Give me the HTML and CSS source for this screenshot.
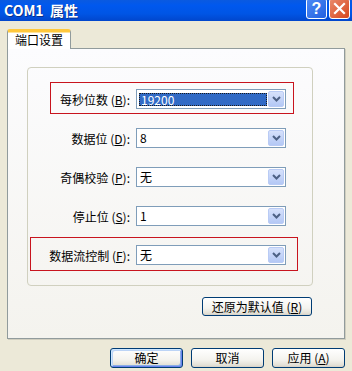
FILE: index.html
```html
<!DOCTYPE html>
<html lang="zh-CN">

<head>
    <meta charset="UTF-8" />
    <meta name="viewport" content="width=device-width, initial-scale=1.0" />
    <title>COM1 属性</title>

    <link rel="stylesheet" href="styles.css">

</head>

<body>
    <div class="window">
        <div class="titlebar">
            <span class="title">COM1&nbsp; 属性</span>
            <div class="caption-buttons">
                <span class="cap help">?</span>
                <span class="cap close">
                    <svg width="13" height="13" viewBox="0 0 13 13">
                        <path d="M2 2 L11 11 M11 2 L2 11" stroke="#fff" stroke-width="2.2" stroke-linecap="square" />
                    </svg>
                </span>
            </div>
        </div>

        <div class="client">
            <div class="tabs">
                <div class="tab active">端口设置</div>
            </div>

            <div class="panel">
                <div class="group">
                    <div class="field">
                        <label>每秒位数 (<u>B</u>):</label>
                        <div class="combo">
                            <span class="value selected">19200</span>
                            <span class="drop"><svg width="9" height="6" viewBox="0 0 9 6"><path d="M1 1 L4.5 4.5 L8 1" fill="none" stroke="#4D6185" stroke-width="2" /></svg></span>
                        </div>
                    </div>
                    <div class="field">
                        <label>数据位 (<u>D</u>):</label>
                        <div class="combo">
                            <span class="value">8</span>
                            <span class="drop"><svg width="9" height="6" viewBox="0 0 9 6"><path d="M1 1 L4.5 4.5 L8 1" fill="none" stroke="#4D6185" stroke-width="2" /></svg></span>
                        </div>
                    </div>
                    <div class="field">
                        <label>奇偶校验 (<u>P</u>):</label>
                        <div class="combo">
                            <span class="value">无</span>
                            <span class="drop"><svg width="9" height="6" viewBox="0 0 9 6"><path d="M1 1 L4.5 4.5 L8 1" fill="none" stroke="#4D6185" stroke-width="2" /></svg></span>
                        </div>
                    </div>
                    <div class="field">
                        <label>停止位 (<u>S</u>):</label>
                        <div class="combo">
                            <span class="value">1</span>
                            <span class="drop"><svg width="9" height="6" viewBox="0 0 9 6"><path d="M1 1 L4.5 4.5 L8 1" fill="none" stroke="#4D6185" stroke-width="2" /></svg></span>
                        </div>
                    </div>
                    <div class="field">
                        <label>数据流控制 (<u>F</u>):</label>
                        <div class="combo">
                            <span class="value">无</span>
                            <span class="drop"><svg width="9" height="6" viewBox="0 0 9 6"><path d="M1 1 L4.5 4.5 L8 1" fill="none" stroke="#4D6185" stroke-width="2" /></svg></span>
                        </div>
                    </div>

                    <!-- red annotation boxes -->
                    <div class="mark mark-baud"></div>
                    <div class="mark mark-flow"></div>
                </div>

                <div class="restore-row">
                    <button class="btn restore">还原为默认值 (<u>R</u>)</button>
                </div>
            </div>

            <div class="actions">
                <button class="btn default">确定</button>
                <button class="btn">取消</button>
                <button class="btn">应用 (<u>A</u>)</button>
            </div>
        </div>
    </div>
</body>

</html>
```

FILE: styles.css
```css
html,
body {
    margin: 0;
    padding: 0;
}

body {
    font-family: "Noto Sans CJK SC", "DejaVu Sans", sans-serif;
    font-size: 12px;
    color: #000;
}

.window {
    width: 352px;
    height: 371px;
    background: #ECE9D8;
    overflow: hidden;
}

.titlebar {
    height: 21px;
    display: flex;
    justify-content: space-between;
    align-items: flex-start;
    background: linear-gradient(#0A5AE0 0, #0058EE 25%, #0055E5 65%, #0146CC 100%);
    overflow: hidden;
}

.title {
    padding-left: 4px;
    line-height: 21px;
    color: #fff;
    font-weight: bold;
    font-size: 14px;
    text-shadow: 1px 1px 0 #0A2F8A;
}

.caption-buttons {
    display: flex;
    gap: 2px;
    margin-top: -2px;
    margin-right: 2px;
}

.cap {
    width: 19px;
    height: 19px;
    border: 1px solid #fff;
    border-radius: 3px;
    display: flex;
    align-items: center;
    justify-content: center;
    color: #fff;
}

.help {
    background: linear-gradient(135deg, #4F8BF5, #2260E0);
    font-family: "Liberation Sans", sans-serif;
    font-weight: bold;
    font-size: 16px;
}

.close {
    background: linear-gradient(135deg, #E98A6C, #D6471E);
}

.client {
    padding: 8px 0 0 7px;
}

.tabs {
    display: flex;
    height: 19px;
}

.tab {
    position: relative;
    z-index: 1;
    height: 20px;
    padding: 0 7px;
    box-sizing: border-box;
    background: #fff;
    border: 1px solid #919B9C;
    border-top: 3px solid #FFC83C;
    border-bottom: none;
    border-radius: 3px 3px 0 0;
    line-height: 16px;
    box-shadow: inset 0 1px 0 #FFE39A;
}

.panel {
    width: 338px;
    height: 291px;
    box-sizing: border-box;
    border: 1px solid #919B9C;
    background: linear-gradient(#FCFCFE, #F4F3EE);
    box-shadow: 1px 1px 0 #D0CEBF;
}

.group {
    position: relative;
    width: 286px;
    height: 219px;
    box-sizing: border-box;
    margin: 18px 0 0 19px;
    padding: 21px 0 0 0;
    border: 1px solid #D0D0BF;
    border-radius: 4px;
    display: flex;
    flex-direction: column;
    gap: 19px;
}

.field {
    display: flex;
    align-items: center;
    height: 20px;
}

.field label {
    width: 102px;
    margin-right: 6px;
    text-align: right;
    white-space: nowrap;
}

.combo {
    width: 150px;
    height: 20px;
    box-sizing: border-box;
    border: 1px solid #7F9DB9;
    background: #fff;
    display: flex;
    align-items: center;
}

.value {
    flex: 1;
    padding-left: 3px;
    line-height: 18px;
}

.value.selected {
    margin: 2px 1px 2px 2px;
    padding-left: 1px;
    line-height: 11px;
    height: 13px;
    box-sizing: border-box;
    background: #316AC5;
    color: #fff;
    border: 1px dotted #1A1A1A;
}

.drop {
    width: 16px;
    height: 16px;
    margin: 0 1px 0 0;
    box-sizing: border-box;
    border: 1px solid #B9CBF5;
    border-radius: 2px;
    background: linear-gradient(#D6E1FB, #B4C8F5);
    display: flex;
    align-items: center;
    justify-content: center;
}

.mark {
    position: absolute;
    box-sizing: border-box;
    border: 1px solid #C8141E;
}

.mark-baud {
    left: 22px;
    top: 14px;
    width: 244px;
    height: 32px;
}

.mark-flow {
    left: 2px;
    top: 169px;
    width: 268px;
    height: 34px;
}

.restore-row {
    display: flex;
    justify-content: flex-end;
    margin: 11px 32px 0 0;
}

.btn {
    height: 20px;
    box-sizing: border-box;
    padding: 0;
    border: 1px solid #003C74;
    border-radius: 3px;
    background: linear-gradient(#FFFFFF 0, #F4F3EE 60%, #E3E0D6 90%, #D6D0C5 100%);
    font-family: inherit;
    font-size: 12px;
    color: #000;
    line-height: 16px;
}

.restore {
    width: 110px;
    height: 19px;
}

.actions {
    display: flex;
    justify-content: flex-end;
    gap: 8px;
    margin: 9px 7px 0 0;
}

.actions .btn {
    width: 73px;
}

.btn.default {
    box-shadow: inset 1px 1px 0 #CEE7FF, inset -1px -1px 0 #6982EE, inset 2px 2px 0 #BCD4F6, inset -2px -2px 0 #89ADE4;
}
```
